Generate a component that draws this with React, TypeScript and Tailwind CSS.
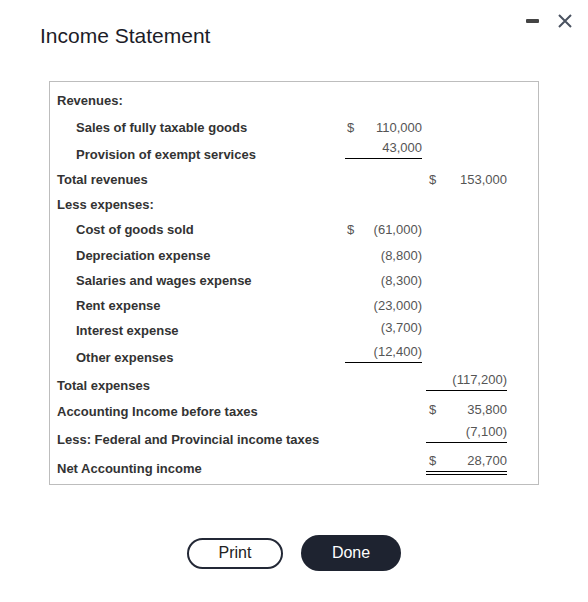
import React from 'react';

type Cell = {
  v: string;
  d?: boolean;
  line?: 'single' | 'double';
  pos?: string;
};

type Row = {
  label: string;
  indent?: boolean;
  h: string;
  c1?: Cell;
  c2?: Cell;
};

const rows: Row[] = [
  { label: 'Revenues:', h: 'h-[26px]' },
  { label: 'Sales of fully taxable goods', indent: true, h: 'h-[27px]', c1: { v: '110,000', d: true } },
  { label: 'Provision of exempt services', indent: true, h: 'h-[27px]', c1: { v: '43,000', line: 'single', pos: 'self-start' } },
  { label: 'Total revenues', h: 'h-[24px]', c2: { v: '153,000', d: true } },
  { label: 'Less expenses:', h: 'h-[25px]' },
  { label: 'Cost of goods sold', indent: true, h: 'h-[26px]', c1: { v: '(61,000)', d: true } },
  { label: 'Depreciation expense', indent: true, h: 'h-[25px]', c1: { v: '(8,800)' } },
  { label: 'Salaries and wages expense', indent: true, h: 'h-[25px]', c1: { v: '(8,300)' } },
  { label: 'Rent expense', indent: true, h: 'h-[25px]', c1: { v: '(23,000)' } },
  { label: 'Interest expense', indent: true, h: 'h-[26px]', c1: { v: '(3,700)', pos: 'self-start pt-[3px]' } },
  { label: 'Other expenses', indent: true, h: 'h-[28px]', c1: { v: '(12,400)', line: 'single', pos: 'self-start pt-[1px]' } },
  { label: 'Total expenses', h: 'h-[27px]', c2: { v: '(117,200)', line: 'single', pos: 'self-start pt-[1px]' } },
  { label: 'Accounting Income before taxes', h: 'h-[26px]', c2: { v: '35,800', d: true, pos: 'self-start pt-[4px]' } },
  { label: 'Less: Federal and Provincial income taxes', h: 'h-[29px]', c2: { v: '(7,100)', line: 'single', pos: 'self-start' } },
  { label: 'Net Accounting income', h: 'h-[30px]', c2: { v: '28,700', d: true, line: 'double', pos: 'self-start' } },
];

const ValueCell = ({ cell, pad }: { cell?: Cell; pad: string }) => {
  if (!cell) return <div />;
  const line =
    cell.line === 'single'
      ? 'border-b border-black pb-[3px]'
      : cell.line === 'double'
        ? 'border-b-4 border-double border-black pb-[3px]'
        : '';
  return (
    <div className={`${cell.pos ?? 'self-center'} flex justify-between leading-[14px] text-[13px] text-[#555] ${line}`}>
      <span className={pad}>{cell.d ? '$' : ''}</span>
      <span>{cell.v}</span>
    </div>
  );
};

export default function App() {
  return (
    <div className="w-[588px] h-[602px] bg-white font-['Liberation_Sans',Arial,sans-serif]">
      {/* Header */}
      <div className="flex items-start justify-between pl-[40px] pr-[16px] pt-[14px]">
        <h1 className="mt-[10px] text-[21px] leading-[24px] text-[#1c1c28]">Income Statement</h1>
        <div className="flex items-center gap-[19px]">
          <div className="w-[13px] h-[4px] bg-[#444] rounded-[1px]" />
          <svg width="14" height="14" viewBox="0 0 14 14">
            <path d="M1 1 L13 13 M13 1 L1 13" stroke="#4a5260" strokeWidth="2" fill="none" />
          </svg>
        </div>
      </div>

      {/* Statement table */}
      <div className="ml-[49px] mt-[33px] w-[490px] border border-[#bdbdbd] pt-[6px]">
        {rows.map((row) => (
          <div key={row.label} className={`grid grid-cols-[295px_77px_4px_81px] ${row.h}`}>
            <div
              className={`self-center ${row.indent ? 'pl-[26px]' : 'pl-[7px]'} text-[13px] leading-[16px] font-bold text-[#333]`}
            >
              {row.label}
            </div>
            <ValueCell cell={row.c1} pad="pl-[2px]" />
            <div />
            <ValueCell cell={row.c2} pad="pl-[3px]" />
          </div>
        ))}
      </div>

      {/* Buttons */}
      <div className="mt-[50px] flex items-center justify-center gap-[18px]">
        <button className="w-[96px] h-[31px] border-2 border-[#232836] rounded-full text-[16px] text-[#222]">
          Print
        </button>
        <button className="w-[100px] h-[36px] bg-[#1e2330] rounded-full text-[16px] text-white">Done</button>
      </div>
    </div>
  );
}
